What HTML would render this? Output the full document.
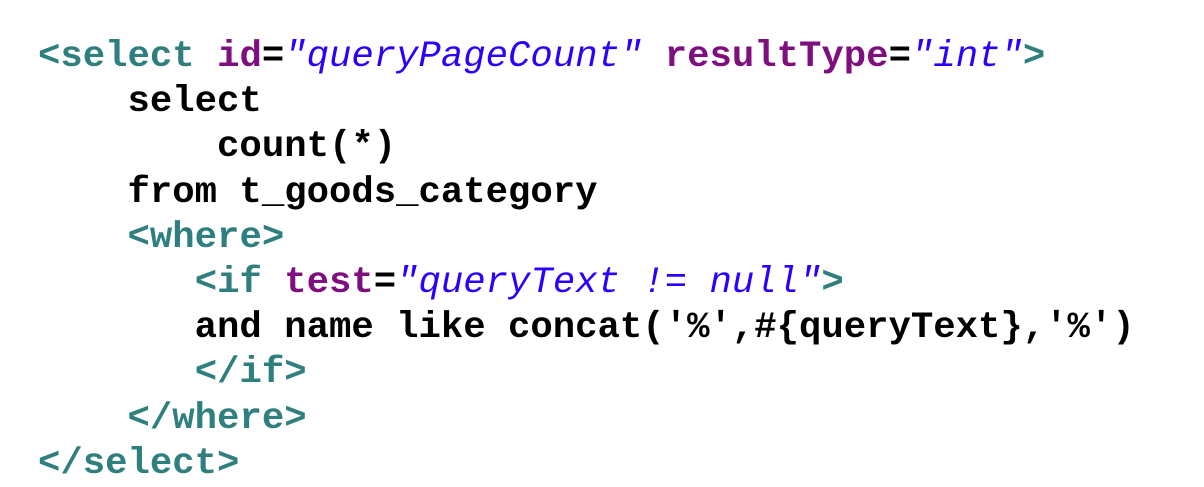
<!DOCTYPE html>
<html><head><style>
body{margin:0;background:#fff;width:1204px;height:486px;overflow:hidden}
pre{margin:0;position:absolute;left:38px;top:35px;font-family:"Liberation Mono",monospace;font-weight:bold;font-size:37.3px;line-height:45.2px;color:#000}
.t{color:#2f7f7f}.a{color:#7f0f7f}.s{color:#2a00ff;font-style:italic;font-weight:normal}
</style></head><body>
<pre><span class="t">&lt;select</span> <span class="a">id</span>=<span class="s">"queryPageCount"</span> <span class="a">resultType</span>=<span class="s">"int"</span><span class="t">&gt;</span>
    select
        count(*)
    from t_goods_category
    <span class="t">&lt;where&gt;</span>
       <span class="t">&lt;if</span> <span class="a">test</span>=<span class="s">"queryText != null"</span><span class="t">&gt;</span>
       and name like concat('%',#{queryText},'%')
       <span class="t">&lt;/if&gt;</span>
    <span class="t">&lt;/where&gt;</span>
<span class="t">&lt;/select&gt;</span></pre>
</body></html>
